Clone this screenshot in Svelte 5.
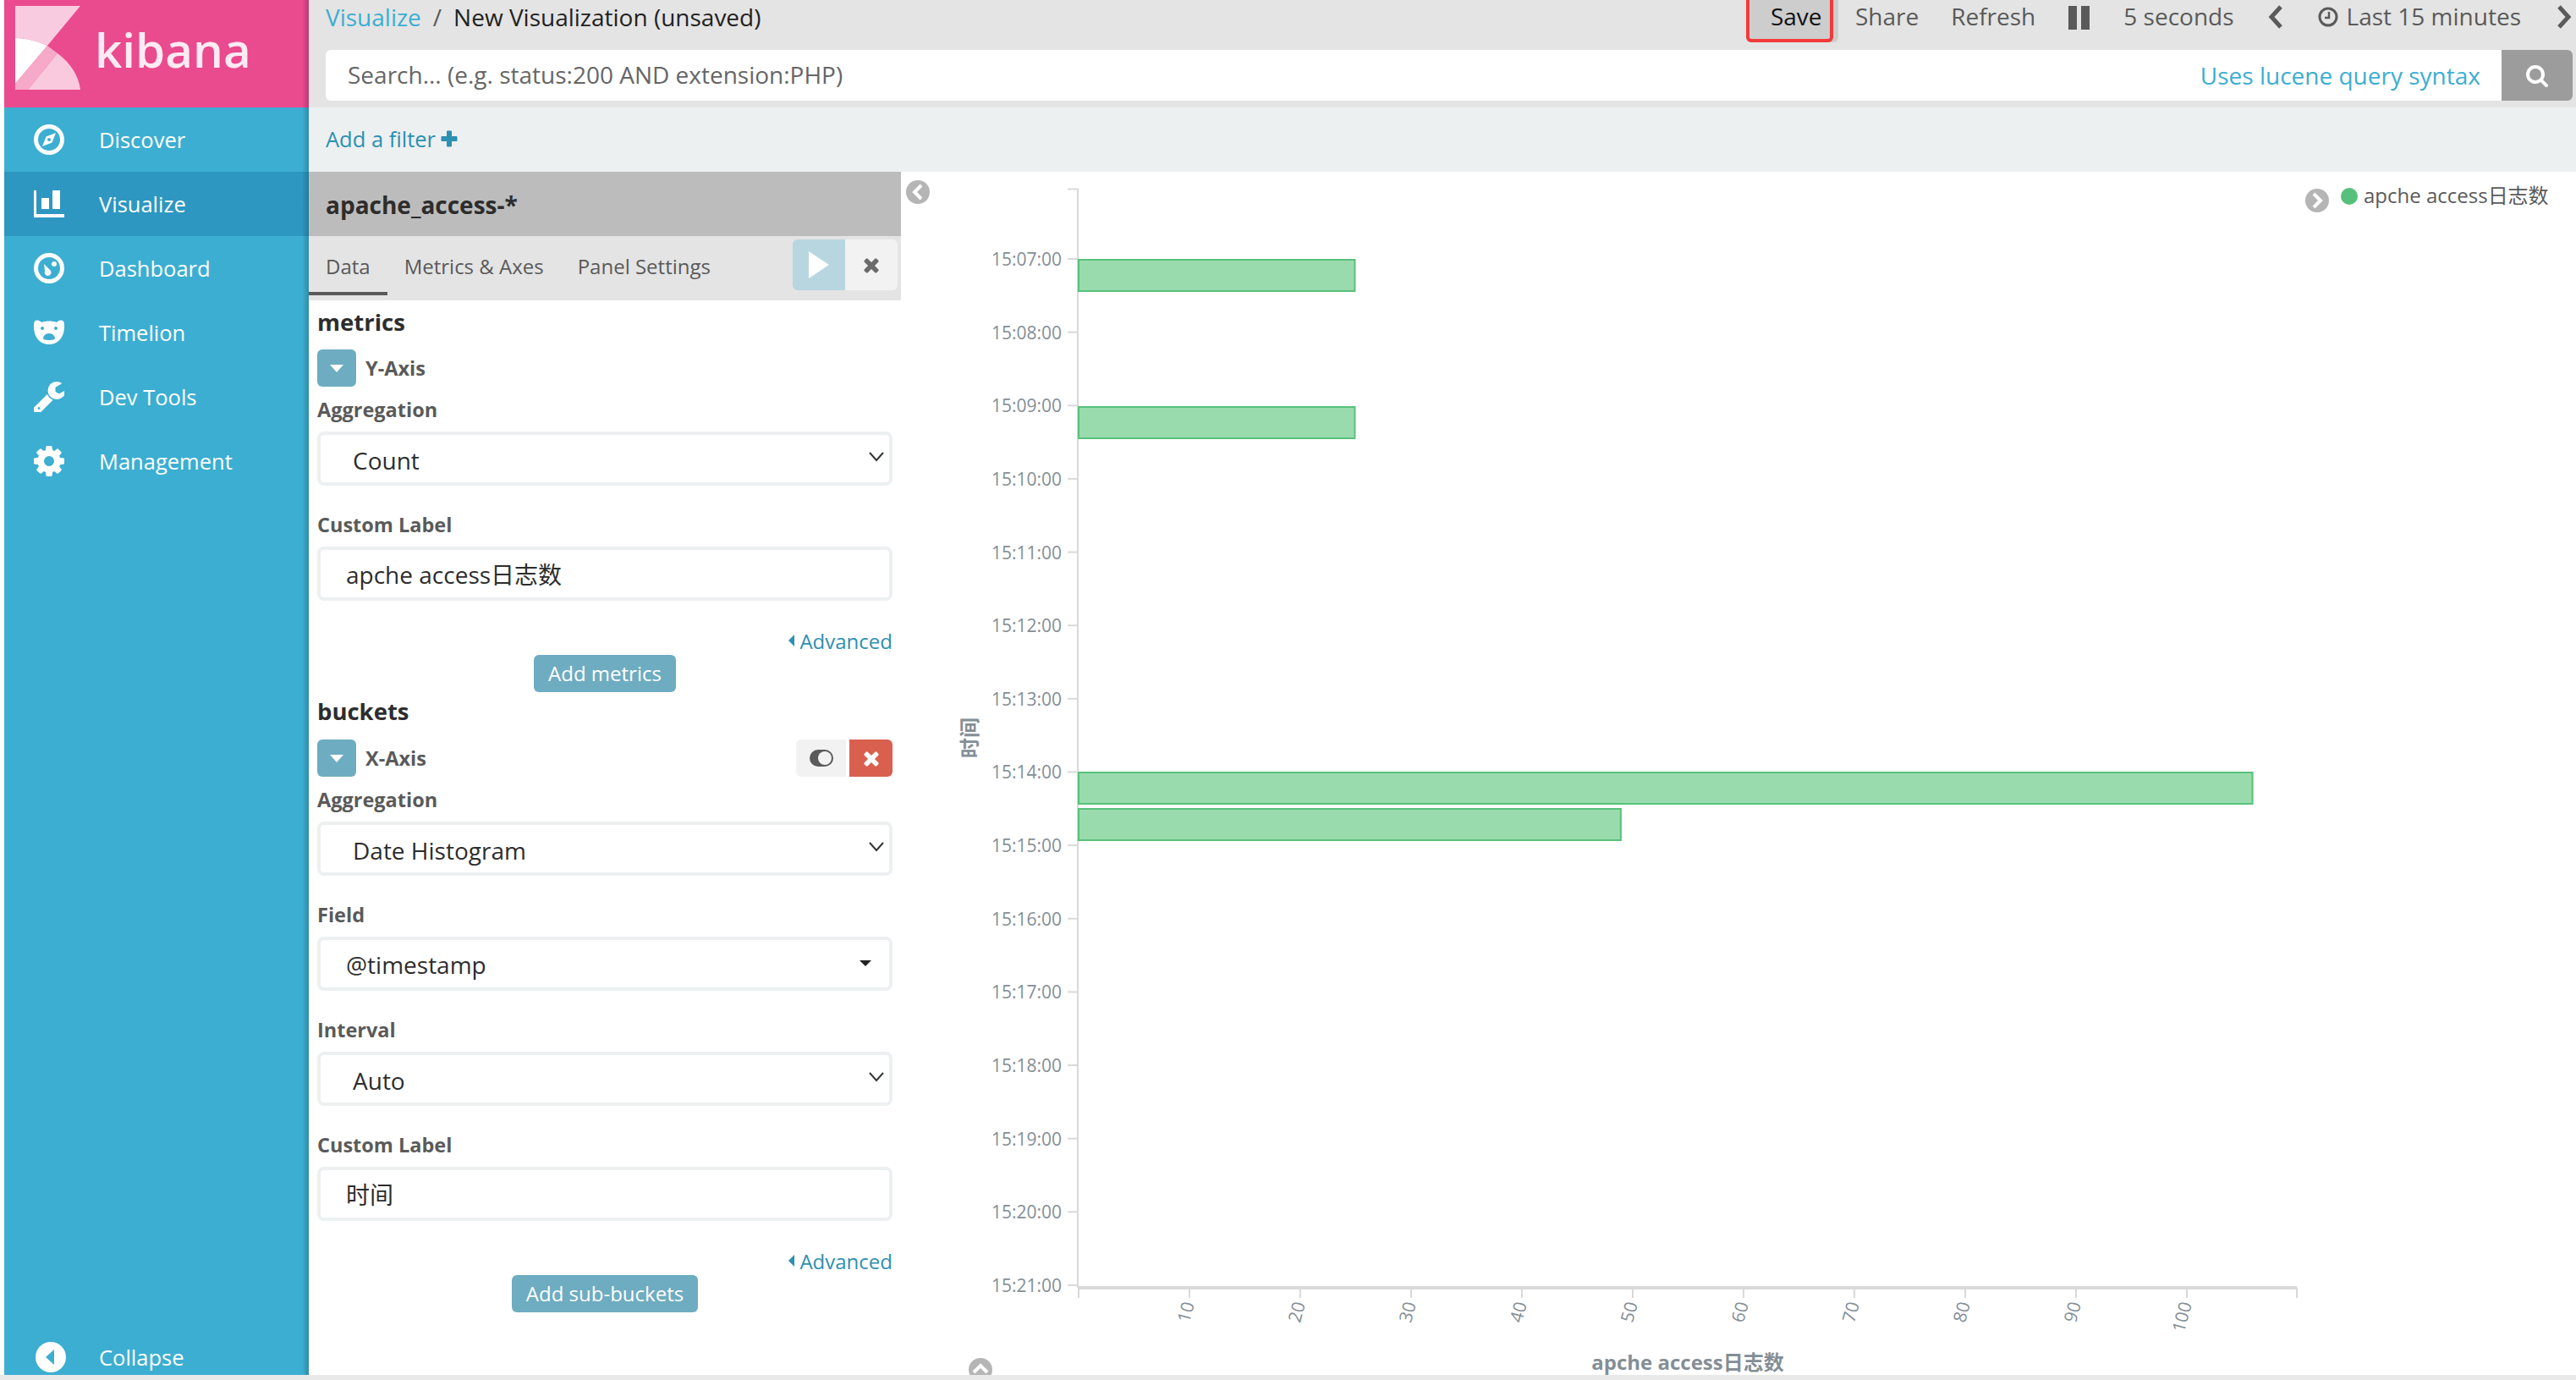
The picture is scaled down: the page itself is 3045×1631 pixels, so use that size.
<script>
    // Sidebar entries: icon path is drawn in a 36x36 box
    const navItems = [
        { label: 'Discover', d: 'M18 0a18 18 0 1 0 0 36a18 18 0 1 0 0-36zM18 5a13 13 0 1 1 0 26a13 13 0 1 1 0-26zM26 10L21.500 21.500L10 26L14.500 14.500zM18 16a2 2 0 1 0 0 4a2 2 0 1 0 0-4z' },
        { label: 'Visualize', active: true, d: 'M0 2h3v28h33v4H0zM9 11h9v13H9zM22 2h9v22h-9z' },
        { label: 'Dashboard', d: 'M18 0a18 18 0 1 0 0 36a18 18 0 1 0 0-36zM18 5a13 13 0 1 1 0 26a13 13 0 1 1 0-26zM24 10a3 3 0 1 1 0 6a3 3 0 1 1 0-6zM12 13l8 8a4 4 0 0 1-6 5a5 5 0 0 1-1-5z' },
        { label: 'Timelion', d: 'M2 4C5 3 7 4 9 6C14 4 22 4 27 6C29 4 31 3 34 4C36 5 36 8 36 11C36 22 30 32 18 32C6 32 0 22 0 11C0 8 0 5 2 4zM10 11a2 2 0 1 0 0 4a2 2 0 1 0 0-4zM26 11a2 2 0 1 0 0 4a2 2 0 1 0 0-4zM18 19c-4 0-7 3-7 6c0 1 3 2 7 2s7-1 7-2c0-3-3-6-7-6z' },
        { label: 'Dev Tools', fa: true, d: 'M448 1472q0-26-19-45t-45-19-45 19-19 45 19 45 45 19 45-19 19-45zm644-420l-682 682q-37 37-90 37-52 0-91-37l-106-108q-38-36-38-90 0-53 38-91l681-681q39 98 114.500 173.500t173.500 114.500zm634-435q0 39-23 106-47 134-164.500 217.500t-258.500 83.500q-185 0-316.500-131.500t-131.500-316.500 131.500-316.500 316.500-131.500q58 0 121.500 16.500t107.500 46.500q16 11 16 28t-16 28l-293 169v224l193 107q5-3 79-48.500t135.500-81 70.500-35.500q15 0 23.500 10t8.500 25z' },
        { label: 'Management', fa: true, d: 'M1152 896q0-106-75-181t-181-75-181 75-75 181 75 181 181 75 181-75 75-181zm512-109v222q0 12-8 23t-20 13l-185 28q-19 54-39 91 35 50 107 138 10 12 10 25t-9 23q-27 37-99 108t-94 71q-12 0-26-9l-138-108q-44 23-91 38-16 136-29 186-7 28-36 28h-222q-14 0-24.500-8.500t-11.500-21.500l-28-184q-49-16-90-37l-141 107q-10 9-25 9-14 0-25-11-126-114-165-168-7-10-7-23 0-12 8-23 15-21 51-66.500t54-70.500q-27-50-41-99l-183-27q-13-2-21-12.500t-8-23.500v-222q0-12 8-23t19-13l186-28q14-46 39-92-40-57-107-138-10-12-10-24 0-10 9-23 26-36 98.500-107.500t94.500-71.500q13 0 26 10l138 107q44-23 91-38 16-136 29-186 7-28 36-28h222q14 0 24.500 8.500t11.500 21.500l28 184q49 16 90 37l142-107q9-9 24-9 13 0 25 10 129 119 165 170 7 8 7 22 0 12-8 23-15 21-51 66.500t-54 70.500q26 50 41 98l183 28q13 2 21 12.500t8 23.500z' }
    ];

    const searchIcon = 'M1216 832q0-185-131.500-316.500t-316.500-131.500-316.500 131.500-131.500 316.500 131.500 316.500 316.500 131.500 316.500-131.500 131.500-316.500zm512 832q0 52-38 90t-90 38q-54 0-90-38l-343-342q-179 124-399 124-143 0-273.500-55.500t-225-150-150-225-55.500-273.500 55.500-273.500 150-225 225-150 273.500-55.500 273.500 55.500 225 150 150 225 55.500 273.500q0 220-124 399l343 343q37 37 37 90z';
    const timesIcon = 'M1490 1322q0 40-28 68l-136 136q-28 28-68 28t-68-28l-294-294-294 294q-28 28-68 28t-68-28l-136-136q-28-28-28-68t28-68l294-294-294-294q-28-28-28-68t28-68l136-136q28-28 68-28t68 28l294 294 294-294q28-28 68-28t68 28l136 136q28 28 28 68t-28 68l-294 294 294 294q28 28 28 68z';

    // Chart geometry, in page pixels (the svg viewBox starts at the panel corner)
    const axisX = 1275;
    const pxPerMinute = 86.64;
    const pxPerUnit = 13.1;
    const minutes = Array.from({ length: 15 }, (_, i) => 7 + i);
    const xTicks = [10, 20, 30, 40, 50, 60, 70, 80, 90, 100];
    const bars = [
        { y: 307, h: 37, value: 25 },
        { y: 481, h: 37, value: 25 },
        { y: 913, h: 37, value: 106 },
        { y: 956, h: 37, value: 49 }
    ];
</script>

<div class="page">
    <div class="shell">
        <aside class="sidebar">
            <div class="brand">
                <svg class="logo" viewBox="18 7 77 100" width="77" height="100">
                    <path fill="#f9cbe0" d="M18 7H95L56 54C45 49 32 45 18 45z" />
                    <path fill="#ffffff" d="M18 45C32 45 45 49 56 54L18 99z" />
                    <path fill="#f6a9c8" d="M18 99L56 54L68 63L33 106H18z" />
                    <path fill="#fbc9de" d="M68 63C84 75 93 90 95 106H33z" />
                </svg>
                <span class="wordmark">kibana</span>
            </div>
            <nav class="nav">
                {#each navItems as item}
                    <div class="nav-item" class:active={item.active}>
                        <svg class="nav-icon" viewBox={item.fa ? '128 128 1536 1536' : '0 0 36 36'} width="36" height="36">
                            <path fill="#fff" fill-rule="evenodd" d={item.d} />
                        </svg>
                        <span>{item.label}</span>
                    </div>
                {/each}
            </nav>
            <div class="collapse">
                <svg viewBox="0 0 36 36" width="36" height="36">
                    <circle cx="18" cy="18" r="18" fill="#fff" />
                    <path fill="#3caed2" d="M12 18L22 9V27z" />
                </svg>
                <span>Collapse</span>
            </div>
        </aside>

        <main class="main">
            <header class="topbar">
                <div class="topbar-row">
                    <div class="crumbs">
                        <span class="crumb-link">Visualize</span>
                        <span class="crumb-sep">/</span>
                        <span class="crumb-current">New Visualization (unsaved)</span>
                    </div>
                    <div class="menu">
                        <span class="save">Save</span>
                        <span class="menu-share">Share</span>
                        <span class="menu-refresh">Refresh</span>
                        <svg class="menu-pause" viewBox="0 0 25 28" width="25" height="28">
                            <path fill="#5a5a5a" d="M0 0h10v28H0zM15 0h10v28H15z" />
                        </svg>
                        <span class="menu-interval">5 seconds</span>
                        <svg class="menu-prev" viewBox="0 0 18 28" width="18" height="28">
                            <path fill="none" stroke="#5a5a5a" stroke-width="5" d="M15 2L4 14L15 26" />
                        </svg>
                        <svg class="menu-clock" viewBox="0 0 24 24" width="24" height="24">
                            <circle cx="12" cy="12" r="10" fill="none" stroke="#5a5a5a" stroke-width="3" />
                            <path fill="none" stroke="#5a5a5a" stroke-width="2.500" d="M13 6V13H8" />
                        </svg>
                        <span class="menu-range">Last 15 minutes</span>
                        <svg class="menu-next" viewBox="0 0 18 28" width="18" height="28">
                            <path fill="none" stroke="#5a5a5a" stroke-width="5" d="M3 2L14 14L3 26" />
                        </svg>
                    </div>
                </div>
                <div class="search">
                    <span class="search-placeholder">Search... (e.g. status:200 AND extension:PHP)</span>
                    <span class="search-hint">Uses lucene query syntax</span>
                    <div class="search-btn">
                        <svg viewBox="0 0 1792 1792" width="28" height="28">
                            <path fill="#fff" d={searchIcon} />
                        </svg>
                    </div>
                </div>
            </header>

            <div class="filterbar">
                <span>Add a filter</span>
                <svg viewBox="0 0 20 20" width="20" height="20">
                    <path fill="#2d8fb2" stroke="#2d8fb2" stroke-width="1" stroke-linejoin="round" d="M7.500 1h5v6.500H19v5h-6.500V19h-5v-6.500H1v-5h6.500z" />
                </svg>
            </div>

            <div class="workspace">
                <section class="panel">
                    <div class="panel-title">apache_access-*</div>
                    <div class="tabs">
                        <span class="tab tab-active">Data</span>
                        <span class="tab">Metrics &amp; Axes</span>
                        <span class="tab">Panel Settings</span>
                        <div class="tab-actions">
                            <div class="apply">
                                <svg viewBox="0 0 24 32" width="24" height="32"><path fill="#fff" d="M0 0L24 16L0 32z" /></svg>
                            </div>
                            <div class="discard">
                                <svg viewBox="0 0 1792 1792" width="26" height="26"><path fill="#6b6b6b" d={timesIcon} /></svg>
                            </div>
                        </div>
                    </div>

                    <div class="form">
                        <h3 class="section-title">metrics</h3>
                        <div class="agg-head">
                            <div class="caret-btn"><span class="caret"></span></div>
                            <span class="agg-name">Y-Axis</span>
                        </div>

                        <div class="field first">
                            <div class="label">Aggregation</div>
                            <div class="control select">Count
                                <svg class="chevron" viewBox="0 0 18 12" width="18" height="12"><path fill="none" stroke="#333" stroke-width="2" d="M1 1L9 10L17 1" /></svg>
                            </div>
                        </div>
                        <div class="field">
                            <div class="label">Custom Label</div>
                            <div class="control text">apche access日志数</div>
                        </div>
                        <div class="advanced"><span class="adv-caret"></span>Advanced</div>
                        <div class="add-row"><span class="add-btn">Add metrics</span></div>

                        <h3 class="section-title buckets">buckets</h3>
                        <div class="agg-head">
                            <div class="caret-btn"><span class="caret"></span></div>
                            <span class="agg-name">X-Axis</span>
                            <div class="agg-actions">
                                <div class="toggle-btn">
                                    <svg viewBox="0 0 28 20" width="28" height="20">
                                        <rect width="28" height="20" rx="10" fill="#5a5a5a" />
                                        <circle cx="18" cy="10" r="8" fill="#f2f2f2" />
                                    </svg>
                                </div>
                                <div class="remove-btn">
                                    <svg viewBox="0 0 1792 1792" width="26" height="26"><path fill="#fff" d={timesIcon} /></svg>
                                </div>
                            </div>
                        </div>

                        <div class="field first">
                            <div class="label">Aggregation</div>
                            <div class="control select">Date Histogram
                                <svg class="chevron" viewBox="0 0 18 12" width="18" height="12"><path fill="none" stroke="#333" stroke-width="2" d="M1 1L9 10L17 1" /></svg>
                            </div>
                        </div>
                        <div class="field">
                            <div class="label">Field</div>
                            <div class="control text field-value">@timestamp<span class="field-caret"></span></div>
                        </div>
                        <div class="field">
                            <div class="label">Interval</div>
                            <div class="control select">Auto
                                <svg class="chevron" viewBox="0 0 18 12" width="18" height="12"><path fill="none" stroke="#333" stroke-width="2" d="M1 1L9 10L17 1" /></svg>
                            </div>
                        </div>
                        <div class="field">
                            <div class="label">Custom Label</div>
                            <div class="control text">时间</div>
                        </div>
                        <div class="advanced"><span class="adv-caret"></span>Advanced</div>
                        <div class="add-row"><span class="add-btn">Add sub-buckets</span></div>
                    </div>
                </section>

                <section class="chart">
                    <svg viewBox="1065 203 1980 1422" width="1980" height="1422">
                        <!-- collapse handles -->
                        <circle cx="1085" cy="227" r="14" fill="#b5b5b5" />
                        <path fill="none" stroke="#fff" stroke-width="4" d="M1089 219L1081 227L1089 235" />
                        <circle cx="2739" cy="237" r="14" fill="#b5b5b5" />
                        <path fill="none" stroke="#fff" stroke-width="4" d="M2735 229L2743 237L2735 245" />
                        <circle cx="1159" cy="1619" r="14" fill="#b5b5b5" />
                        <path fill="none" stroke="#fff" stroke-width="4" d="M1151 1622L1159 1614L1167 1622" />

                        <!-- legend -->
                        <circle cx="2777" cy="232" r="10" fill="#57c17b" />
                        <text class="legend" x="2794" y="240">apche access日志数</text>

                        <!-- y axis -->
                        <path class="axis" d="M1262 223.500H1274V1522" />
                        {#each minutes as m, i}
                            <path class="axis" d="M1262 {306 + i * pxPerMinute}H1274" />
                            <text class="tick" x="1255" y={314 + i * pxPerMinute} text-anchor="end">15:{String(m).padStart(2, '0')}:00</text>
                        {/each}
                        <text class="axis-title" transform="translate(1155 872) rotate(-90)" text-anchor="middle">时间</text>

                        <!-- x axis -->
                        <path class="axis axis-x" d="M1274 1522H2715" />
                        <path class="axis" d="M1275 1522V1534M2715 1522V1534" />
                        {#each xTicks as t}
                            <path class="axis" d="M{axisX + t * pxPerUnit} 1522V1534" />
                            <text class="tick" transform="translate({axisX + t * pxPerUnit + 6} 1541) rotate(-75)" text-anchor="end">{t}</text>
                        {/each}
                        <text class="axis-title" x="1995" y="1619" text-anchor="middle">apche access日志数</text>

                        <!-- bars -->
                        {#each bars as b}
                            <rect x={axisX} y={b.y} width={b.value * pxPerUnit - 1} height={b.h} fill="#9adbae" stroke="#57c17b" stroke-width="2" />
                        {/each}
                    </svg>
                </section>
            </div>
        </main>
    </div>
    <div class="bottom-strip"></div>
</div>

<style>
    :global(body) {
        margin: 0;
        background: #fff;
    }

    .page {
        width: 3045px;
        height: 1631px;
        overflow: hidden;
        font-family: "Open Sans", "Noto Sans CJK SC", sans-serif;
        color: #333;
    }

    .shell {
        display: flex;
        height: 1625px;
        padding-left: 5px;
        box-sizing: border-box;
    }

    .bottom-strip {
        height: 6px;
        background: #e9e9e9;
    }

    /* Sidebar */
    .sidebar {
        width: 360px;
        flex: none;
        display: flex;
        flex-direction: column;
        background: #3caed2;
        color: #fff;
        font-size: 25.500px;
        position: relative;
    }

    /* inner shadow along the right edge, over the pink brand and the rows */
    .sidebar::after {
        content: '';
        position: absolute;
        top: 0;
        right: 0;
        bottom: 0;
        width: 8px;
        background: linear-gradient(to right, rgba(0, 0, 0, 0), rgba(0, 0, 0, 0.2));
    }

    .brand {
        height: 127px;
        background: #ea4a8e;
        display: flex;
        align-items: flex-start;
        padding: 7px 0 0 13px;
        box-sizing: border-box;
    }

    .wordmark {
        margin: 9px 0 0 17px;
        font-size: 56.500px;
        line-height: 86px;
        font-weight: 600;
        color: #fdeaf2;
    }

    .nav-item {
        height: 76px;
        display: flex;
        align-items: center;
        gap: 41px;
        padding-left: 35px;
    }

    .nav-item.active {
        background: #2d97c1;
    }

    .collapse {
        margin-top: auto;
        height: 42px;
        display: flex;
        align-items: center;
        gap: 39px;
        padding-left: 37px;
    }

    /* Top bar */
    .main {
        flex: 1;
        min-width: 0;
        display: flex;
        flex-direction: column;
    }

    .topbar {
        height: 127px;
        background: #e4e4e4;
        flex: none;
    }

    .topbar-row {
        height: 59px;
        display: flex;
        justify-content: space-between;
        font-size: 28px;
        color: #5a5a5a;
    }

    .crumbs {
        padding-left: 20px;
        height: 40px;
        display: flex;
        align-items: center;
    }

    .crumb-link {
        color: #3caed2;
    }

    .crumb-sep {
        margin: 0 14px;
    }

    .crumb-current {
        color: #222;
    }

    .menu {
        display: flex;
        align-items: flex-start;
        height: 42px;
        line-height: 39px;
        padding-right: 5px;
    }

    .save {
        color: #111;
        background: #cdcdcd;
        width: 103px;
        height: 50px;
        box-sizing: border-box;
        border: solid #f33a3a;
        border-width: 0 4px 4px;
        border-radius: 0 0 6px 6px;
        padding-left: 25px;
        box-shadow: 6px 0 0 #cdcdcd;
    }

    .menu-share { margin-left: 26px; }
    .menu-refresh { margin-left: 38px; }
    .menu-pause { margin: 7px 0 0 39px; }
    .menu-interval { margin-left: 40px; }
    .menu-prev { margin: 6px 0 0 40px; }
    .menu-clock { margin: 8px 0 0 41px; }
    .menu-range { margin-left: 10px; }
    .menu-next { margin: 6px 0 0 42px; }

    .search {
        margin: 0 4px 0 20px;
        height: 60px;
        background: #fff;
        border-radius: 6px;
        display: flex;
        align-items: center;
        font-size: 28px;
        overflow: hidden;
        padding-left: 26px;
    }

    .search-placeholder {
        color: #666;
        flex: 1;
        padding-bottom: 2px;
    }

    .search-hint {
        color: #3caed2;
        margin-right: 25px;
    }

    .search-btn {
        width: 84px;
        height: 60px;
        background: #9c9c9c;
        display: flex;
        align-items: center;
        justify-content: center;
    }

    .filterbar {
        height: 76px;
        flex: none;
        background: #ecf0f1;
        padding: 0 0 3px 20px;
        box-sizing: border-box;
        display: flex;
        align-items: center;
        gap: 6px;
        font-size: 25.500px;
        color: #2d8fb2;
    }

    /* Editor panel */
    .workspace {
        flex: 1;
        display: flex;
        min-height: 0;
    }

    .panel {
        width: 700px;
        flex: none;
    }

    .panel-title {
        height: 76px;
        background: #bcbcbc;
        padding-left: 20px;
        line-height: 78px;
        font-size: 28px;
        font-weight: 700;
        color: #2d2d2d;
    }

    .tabs {
        height: 76px;
        background: #e4e4e4;
        display: flex;
        font-size: 24px;
        color: #5a5a5a;
    }

    .tab {
        height: 76px;
        box-sizing: border-box;
        padding: 16px 20px 0;
        line-height: 40px;
    }

    .tab-active {
        box-shadow: inset 0 -6px 0 #e4e4e4, inset 0 -10px 0 #5a5a5a;
    }

    .tab-actions {
        margin: 4px 4px 0 auto;
        display: flex;
        height: 60px;
        border-radius: 6px;
        overflow: hidden;
    }

    .apply,
    .discard {
        width: 62px;
        display: flex;
        align-items: center;
        justify-content: center;
    }

    .apply { background: #b7d6e0; }
    .discard { background: #f2f2f2; }

    .form {
        padding: 0 10px;
    }

    .section-title {
        margin: 0;
        height: 52px;
        line-height: 52px;
        font-size: 27.500px;
        font-weight: 700;
        color: #2d2d2d;
    }

    .section-title.buckets {
        height: 48px;
        line-height: 46px;
    }

    .agg-head {
        margin-top: 6px;
        height: 44px;
        display: flex;
        align-items: center;
        gap: 11px;
    }

    .buckets + .agg-head {
        margin-top: 8px;
    }

    .caret-btn {
        width: 46px;
        height: 44px;
        background: #6eacc1;
        border-radius: 6px;
        display: flex;
        align-items: center;
        justify-content: center;
    }

    .caret {
        width: 0;
        height: 0;
        border: 8px solid transparent;
        border-top: 9px solid #fff;
        border-bottom: 0;
    }

    .agg-name {
        font-size: 23.500px;
        font-weight: 700;
        color: #5a5a5a;
    }

    .agg-actions {
        margin-left: auto;
        display: flex;
        gap: 4px;
    }

    .toggle-btn,
    .remove-btn {
        height: 44px;
        display: flex;
        align-items: center;
        justify-content: center;
    }

    .toggle-btn {
        width: 59px;
        background: #f2f2f2;
        border-radius: 6px 0 0 6px;
    }

    .remove-btn {
        width: 51px;
        background: #d9604f;
        border-radius: 0 6px 6px 0;
    }

    .field {
        margin-top: 27px;
    }

    .field.first {
        margin-top: 8px;
    }

    .label {
        height: 40px;
        line-height: 38px;
        font-size: 23.500px;
        font-weight: 700;
        color: #5a5a5a;
    }

    .control {
        margin-top: 5px;
        height: 64px;
        box-sizing: border-box;
        border: 4px solid #ecf0f1;
        border-radius: 8px;
        background: #fff;
        display: flex;
        align-items: center;
        font-size: 28px;
        color: #2d2d2d;
        position: relative;
    }

    .control.select {
        padding: 4px 0 0 38px;
    }

    .control.text {
        padding-left: 30px;
    }

    .control.field-value {
        padding-top: 2px;
    }

    .chevron {
        position: absolute;
        right: 6px;
        top: 20px;
    }

    .field-caret {
        position: absolute;
        right: 21px;
        top: 24px;
        border: 7px solid transparent;
        border-top: 7px solid #222;
        border-bottom: 0;
    }

    .advanced {
        margin-top: 30px;
        height: 34px;
        display: flex;
        align-items: center;
        justify-content: flex-end;
        font-size: 24px;
        color: #2d8fb2;
    }

    .adv-caret {
        margin-right: 6px;
        border: 7px solid transparent;
        border-right: 7px solid #2d8fb2;
        border-left: 0;
    }

    .add-row {
        display: flex;
        justify-content: center;
    }

    .add-btn {
        height: 44px;
        line-height: 44px;
        padding: 0 17px;
        border-radius: 6px;
        background: #6eacc1;
        color: #fff;
        font-size: 24px;
    }

    /* Chart */
    .chart {
        flex: 1;
        min-width: 0;
        overflow: hidden;
    }

    .chart svg {
        display: block;
    }

    .axis {
        fill: none;
        stroke: #d9d9d9;
        stroke-width: 2;
    }

    .axis-x {
        stroke-width: 4;
    }

    .tick {
        font-size: 21px;
        fill: #848e96;
    }

    .axis-title {
        font-size: 24px;
        font-weight: 700;
        fill: #848e96;
    }

    .legend {
        font-size: 24px;
        fill: #5a5a5a;
    }
</style>
